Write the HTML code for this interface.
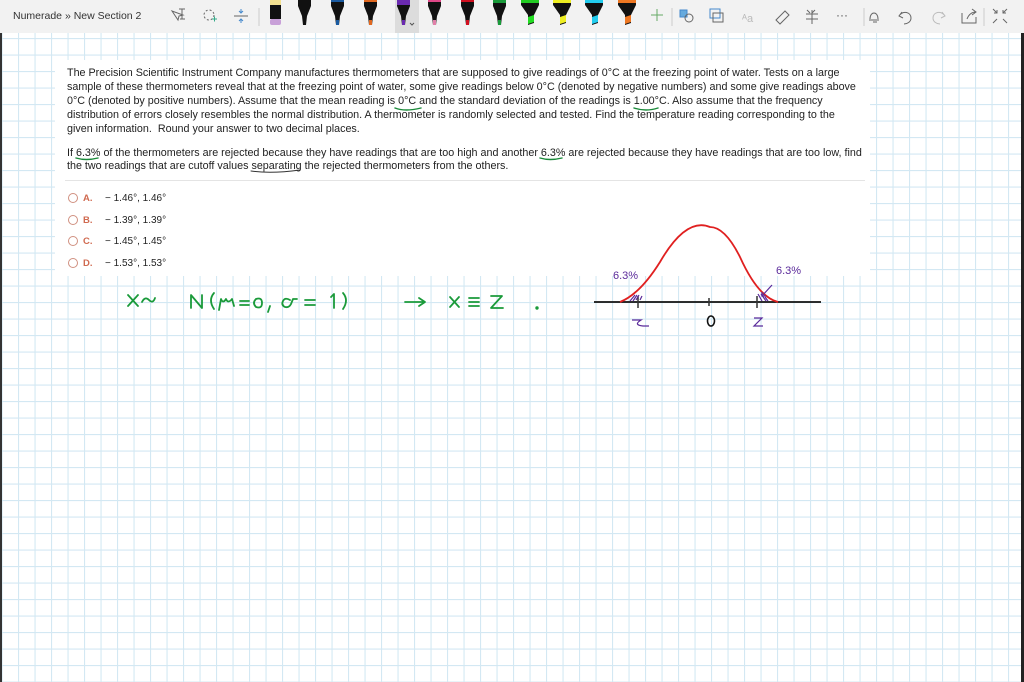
<!DOCTYPE html>
<html><head><meta charset="utf-8"><style>
html,body{margin:0;padding:0;width:1024px;height:682px;overflow:hidden;background:#fff;font-family:"Liberation Sans",Arial,sans-serif}
.tb{position:absolute;left:0;top:0;width:1024px;height:33px;background:#f2f2f2}
.card{position:absolute;left:55px;top:60px;width:815px;height:216px;background:#fff}
.t{position:absolute;left:67px;font-size:10.75px;color:#222;white-space:nowrap;line-height:13px}
.o{position:absolute;left:68px;font-size:10px;color:#222;white-space:nowrap}
.o i{display:inline-block;width:8px;height:8px;border:1.3px solid #d09080;border-radius:50%;vertical-align:-2px;margin-right:5px}
.o b{color:#d06a50;font-weight:bold;display:inline-block;width:22px;font-size:9.5px}
</style></head><body>
<svg style="position:absolute;left:0;top:0" width="1024" height="682">
<defs><pattern id="g" x="1.5" y="5" width="16.5" height="16.5" patternUnits="userSpaceOnUse">
<path d="M0.5 0V16.5M0 0.5H16.5" stroke="#d3e8f3" stroke-width="1.2" fill="none"/></pattern></defs>
<rect width="1024" height="682" fill="url(#g)"/>
<rect x="0" y="0" width="2" height="682" fill="#333"/>
<rect x="1021" y="0" width="3" height="682" fill="#222"/>
</svg>
<div class="tb"></div>
<div style="position:absolute;left:13px;top:10px;font-size:10.5px;color:#333">Numerade » New Section 2</div>
<svg style="position:absolute;left:0;top:0" width="1024" height="34">
<g stroke="#666" fill="none" stroke-width="1">
<path d="M172 11l6 9 1-4 4-1z M179 9h6M182 9v10M180 19h5"/>
<circle cx="209" cy="15" r="5" stroke-dasharray="2 2"/><path d="M212 19h5M214.5 16.5v5" stroke="#3a8"/>
<path d="M234 16h14" /><path d="M241 9v4M239 11l2 2 2-2M241 23v-4M239 21l2-2 2 2" stroke="#48c"/>
<path d="M259 8v18" stroke="#ccc"/>
<path d="M657 9v12M651 15h12" stroke="#6a6"/>
<path d="M672 8v18M864 8v18M984 8v18" stroke="#ccc"/>
<rect x="680" y="10" width="7" height="7" fill="#6ad" stroke="#48c"/><circle cx="689" cy="18" r="4"/>
<rect x="710" y="9" width="10" height="9" stroke="#48c"/><rect x="713" y="13" width="10" height="9"/>
<text x="742" y="22" font-size="11" fill="#bbb" stroke="none">ᴬa</text>
<path d="M776 20l9-9 4 4-9 9z"/>
<path d="M812 10v14M806 14h12M806 19h12M807 10l3 3M815 10l-3 3"/>
<text x="836" y="19" font-size="12" fill="#555" stroke="none">···</text>
<path d="M869 20h10M870 19c0-8 8-8 8 0M873 22h4"/>
<path d="M902 12l-3 4 4 2M899 16c4-6 12-4 12 2 0 4-4 6-7 6"/>
<path d="M942 12l3 4-4 2M945 16c-4-6-12-4-12 2 0 4 4 6 7 6" stroke="#bbb"/>
<path d="M962 13v10h14v-6M967 19c2-5 5-7 9-7M972 9l4 3-4 3"/>
<path d="M993 9l4 4M1007 9l-4 4M993 23l4-4M1007 23l-4-4M997 10v3h-3M1003 10v3h3"/>
</g>
<rect x="395" y="0" width="24" height="33" fill="#dcdcdc"/>
<g>
<rect x="270" y="0" width="11" height="5" fill="#f2e090"/><rect x="270" y="5" width="11" height="14" fill="#111"/><rect x="270" y="19" width="11" height="6" rx="2" fill="#c8a0d8"/>
</g>
<g fill="#111">
<path d="M298 0h13v6l-4 10-1 9h-3l-1-9-4-10z"/><path d="M331 0h13v6l-4 10-1 9h-3l-1-9-4-10z"/>
<path d="M364 0h13v6l-4 10-1 9h-3l-1-9-4-10z"/><path d="M397 0h13v6l-4 10-1 9h-3l-1-9-4-10z"/>
<path d="M428 0h13v6l-4 10-1 9h-3l-1-9-4-10z"/><path d="M461 0h13v6l-4 10-1 9h-3l-1-9-4-10z"/>
<path d="M493 0h13v6l-4 10-1 9h-3l-1-9-4-10z"/>
<path d="M521 0h18v5l-5 10v8l-6 2v-10l-7-10z"/><path d="M553 0h18v5l-5 10v8l-6 2v-10l-7-10z"/>
<path d="M585 0h18v5l-5 10v8l-6 2v-10l-7-10z"/><path d="M618 0h18v5l-5 10v8l-6 2v-10l-7-10z"/>
</g>
<g>
<rect x="331" y="0" width="13" height="2" fill="#1a5aa0"/><rect x="336" y="20" width="3" height="5" fill="#1a5aa0"/>
<rect x="364" y="0" width="13" height="2" fill="#e06820"/><rect x="369" y="20" width="3" height="5" fill="#e06820"/>
<rect x="397" y="0" width="13" height="5" fill="#6a2ab0"/><rect x="402" y="20" width="3" height="5" fill="#6a2ab0"/>
<rect x="428" y="0" width="13" height="2" fill="#e04888"/><rect x="433" y="20" width="3" height="5" fill="#e080a8"/>
<rect x="461" y="0" width="13" height="2" fill="#d01020"/><rect x="466" y="20" width="3" height="5" fill="#d01020"/>
<rect x="493" y="0" width="13" height="3" fill="#1a9a3a"/><rect x="498" y="20" width="3" height="5" fill="#1a9a3a"/>
<rect x="521" y="0" width="18" height="3" fill="#22cc22"/><path d="M528 17l6-2v7l-6 2z" fill="#22dd22"/>
<rect x="553" y="0" width="18" height="3" fill="#eeee22"/><path d="M560 17l6-2v7l-6 2z" fill="#eeee22"/>
<rect x="585" y="0" width="18" height="3" fill="#22ccee"/><path d="M592 17l6-2v7l-6 2z" fill="#22ccee"/>
<rect x="618" y="0" width="18" height="3" fill="#ee7722"/><path d="M625 17l6-2v7l-6 2z" fill="#ee7722"/>
</g>
<path d="M410 23l2 2 2-2" stroke="#555" fill="none"/>
</svg>
<div class="card"></div>
<div class="t" style="top:67px">The Precision Scientific Instrument Company manufactures thermometers that are supposed to give readings of 0°C at the freezing point of water. Tests on a large</div>
<div class="t" style="top:81px">sample of these thermometers reveal that at the freezing point of water, some give readings below 0°C (denoted by negative numbers) and some give readings above</div>
<div class="t" style="top:95px">0°C (denoted by positive numbers). Assume that the mean reading is 0°C and the standard deviation of the readings is 1.00°C. Also assume that the frequency</div>
<div class="t" style="top:109px">distribution of errors closely resembles the normal distribution. A thermometer is randomly selected and tested. Find the temperature reading corresponding to the</div>
<div class="t" style="top:123px">given information.&nbsp; Round your answer to two decimal places.</div>
<div class="t" style="top:147px">If 6.3% of the thermometers are rejected because they have readings that are too high and another 6.3% are rejected because they have readings that are too low, find</div>
<div class="t" style="top:160px">the two readings that are cutoff values separating the rejected thermometers from the others.</div>
<div style="position:absolute;left:65px;top:180px;width:800px;height:1px;background:#e4e4e4"></div>
<div class="o" style="top:193px"><i></i><b>A.</b>− 1.46°, 1.46°</div>
<div class="o" style="top:215px"><i></i><b>B.</b>− 1.39°, 1.39°</div>
<div class="o" style="top:236px"><i></i><b>C.</b>− 1.45°, 1.45°</div>
<div class="o" style="top:258px"><i></i><b>D.</b>− 1.53°, 1.53°</div>
<svg style="position:absolute;left:0;top:0" width="1024" height="682" fill="none">
<g stroke="#1a8a3a" stroke-width="1.4" stroke-linecap="round">
<path d="M395 108q10 4 26 0M634 108q12 4 24 0"/>
<path d="M76 158q10 3 22 0M540 158q10 3 22 0"/>
<path d="M251 171q20 3 49-1" stroke="#333" stroke-width="1"/>
</g>
<g stroke="#1a9a3a" stroke-width="1.8" stroke-linecap="round" stroke-linejoin="round">
<path d="M128 295l10 11M138 295l-10 11M142 302q3-6 7-2t6-2"/>
<path d="M191 308v-13l11 13v-13"/>
<path d="M214 293q-6 7 0 16"/>
<path d="M219 310l2-11q2 5 5 0q2 5 6 0l2 7"/>
<path d="M240 301h9M240 305h9"/>
<path d="M256 299q6-2 6 4t-6 4q-4-4 0-8"/>
<path d="M270 306l-2 6"/>
<path d="M290 300q-5-3-7 1t2 6q4 1 6-3l2-5h4"/>
<path d="M305 300h10M305 305h10"/>
<path d="M331 297l3-3v14"/>
<path d="M343 293q6 7 0 16"/>
<path d="M405 302h20M419 298l6 4-6 4"/>
<path d="M450 297l9 10M459 297l-9 10"/>
<path d="M469 298h10M469 302h10M469 306h10"/>
<path d="M491 296h11l-11 12h12"/>
<circle cx="537" cy="308" r="0.8" fill="#1a9a3a"/>
</g>
<path d="M594 302h227" stroke="#111" stroke-width="1.8"/>
<path d="M709 298v8M757 296v12M638 296v12" stroke="#333" stroke-width="1.5"/>
<path d="M620 302q20-8 40-40q26-45 50-35q15 0 30 30q18 40 38 45" stroke="#e02020" stroke-width="1.8"/>
<g stroke="#5a2a9a" stroke-width="1.2">
<path d="M630 301l5-6M633 301l4-6M636 300l3-5M640 300l2-4M758 294l4 7M761 294l5 7M765 297l3 4"/>
<path d="M632 320h9q-8 5 2 6h6M754 318h8l-8 8h9M772 285l-10 11M762 292v4h4"/>
<text x="613" y="279" font-size="11" fill="#5a2a9a" stroke="none" font-family="Liberation Sans">6.3%</text>
<text x="776" y="274" font-size="11" fill="#5a2a9a" stroke="none" font-family="Liberation Sans">6.3%</text>
</g>
<ellipse cx="711" cy="321" rx="3.5" ry="5" stroke="#111" stroke-width="1.6"/>
</svg>
</body></html>
